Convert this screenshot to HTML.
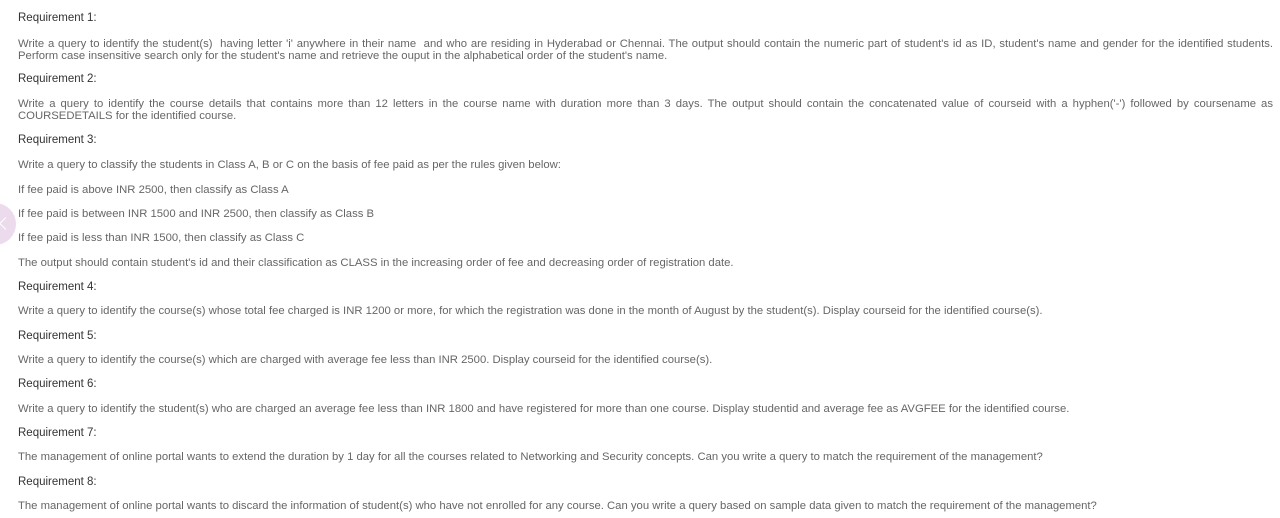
<!DOCTYPE html>
<html><head><meta charset="utf-8"><style>
html,body{margin:0;padding:0;background:#fff;width:1280px;height:518px;overflow:hidden}
body{font-family:"Liberation Sans",sans-serif;font-size:11.3px;color:#666;position:relative}
.l{position:absolute;left:18px;white-space:nowrap;line-height:12px}
.h{color:#333;font-size:11.5px}
.j{width:1255px;white-space:normal;text-align:justify;text-align-last:left}
.f{width:1255px;white-space:nowrap;text-align:justify;text-align-last:justify}
.c{position:absolute;left:-26px;top:203px;width:42px;height:42px;border-radius:50%;background:#e9d8ec;opacity:.9}
.c:after{content:"";position:absolute;left:27px;top:16px;width:8px;height:8px;border-left:1.5px solid #fff;border-bottom:1.5px solid #fff;transform:rotate(45deg)}
</style></head><body>
<div class="l h" style="top:12px">Requirement 1:</div>
<div class="l f" style="top:38px">Write a query to identify the student(s)&nbsp; having letter 'i' anywhere in their name&nbsp; and who are residing in Hyderabad or Chennai. The output should contain the numeric part of student's id as ID, student's name and gender for the identified students.</div>
<div class="l" style="top:50px">Perform case insensitive search only for the student's name and retrieve the ouput in the alphabetical order of the student's name.</div>
<div class="l h" style="top:73px">Requirement 2:</div>
<div class="l j" style="top:98px">Write a query to identify the course details that contains more than 12 letters in the course name with duration more than 3 days. The output should contain the concatenated value of courseid with a hyphen('-') followed by coursename as COURSEDETAILS for the identified course.</div>
<div class="l h" style="top:134px">Requirement 3:</div>
<div class="l" style="top:159px">Write a query to classify the students in Class A, B or C on the basis of fee paid as per the rules given below:</div>
<div class="l" style="top:184px">If fee paid is above INR 2500, then classify as Class A</div>
<div class="l" style="top:208px">If fee paid is between INR 1500 and INR 2500, then classify as Class B</div>
<div class="l" style="top:232px">If fee paid is less than INR 1500, then classify as Class C</div>
<div class="l" style="top:257px">The output should contain student's id and their classification as CLASS in the increasing order of fee and decreasing order of registration date.</div>
<div class="l h" style="top:281px">Requirement 4:</div>
<div class="l" style="top:305px">Write a query to identify the course(s) whose total fee charged is INR 1200 or more, for which the registration was done in the month of August by the student(s). Display courseid for the identified course(s).</div>
<div class="l h" style="top:330px">Requirement 5:</div>
<div class="l" style="top:354px">Write a query to identify the course(s) which are charged with average fee less than INR 2500. Display courseid for the identified course(s).</div>
<div class="l h" style="top:378px">Requirement 6:</div>
<div class="l" style="top:403px">Write a query to identify the student(s) who are charged an average fee less than INR 1800 and have registered for more than one course. Display studentid and average fee as AVGFEE for the identified course.</div>
<div class="l h" style="top:427px">Requirement 7:</div>
<div class="l" style="top:451px">The management of online portal wants to extend the duration by 1 day for all the courses related to Networking and Security concepts. Can you write a query to match the requirement of the management?</div>
<div class="l h" style="top:476px">Requirement 8:</div>
<div class="l" style="top:500px">The management of online portal wants to discard the information of student(s) who have not enrolled for any course. Can you write a query based on sample data given to match the requirement of the management?</div>
<div class="c"></div>
</body></html>
